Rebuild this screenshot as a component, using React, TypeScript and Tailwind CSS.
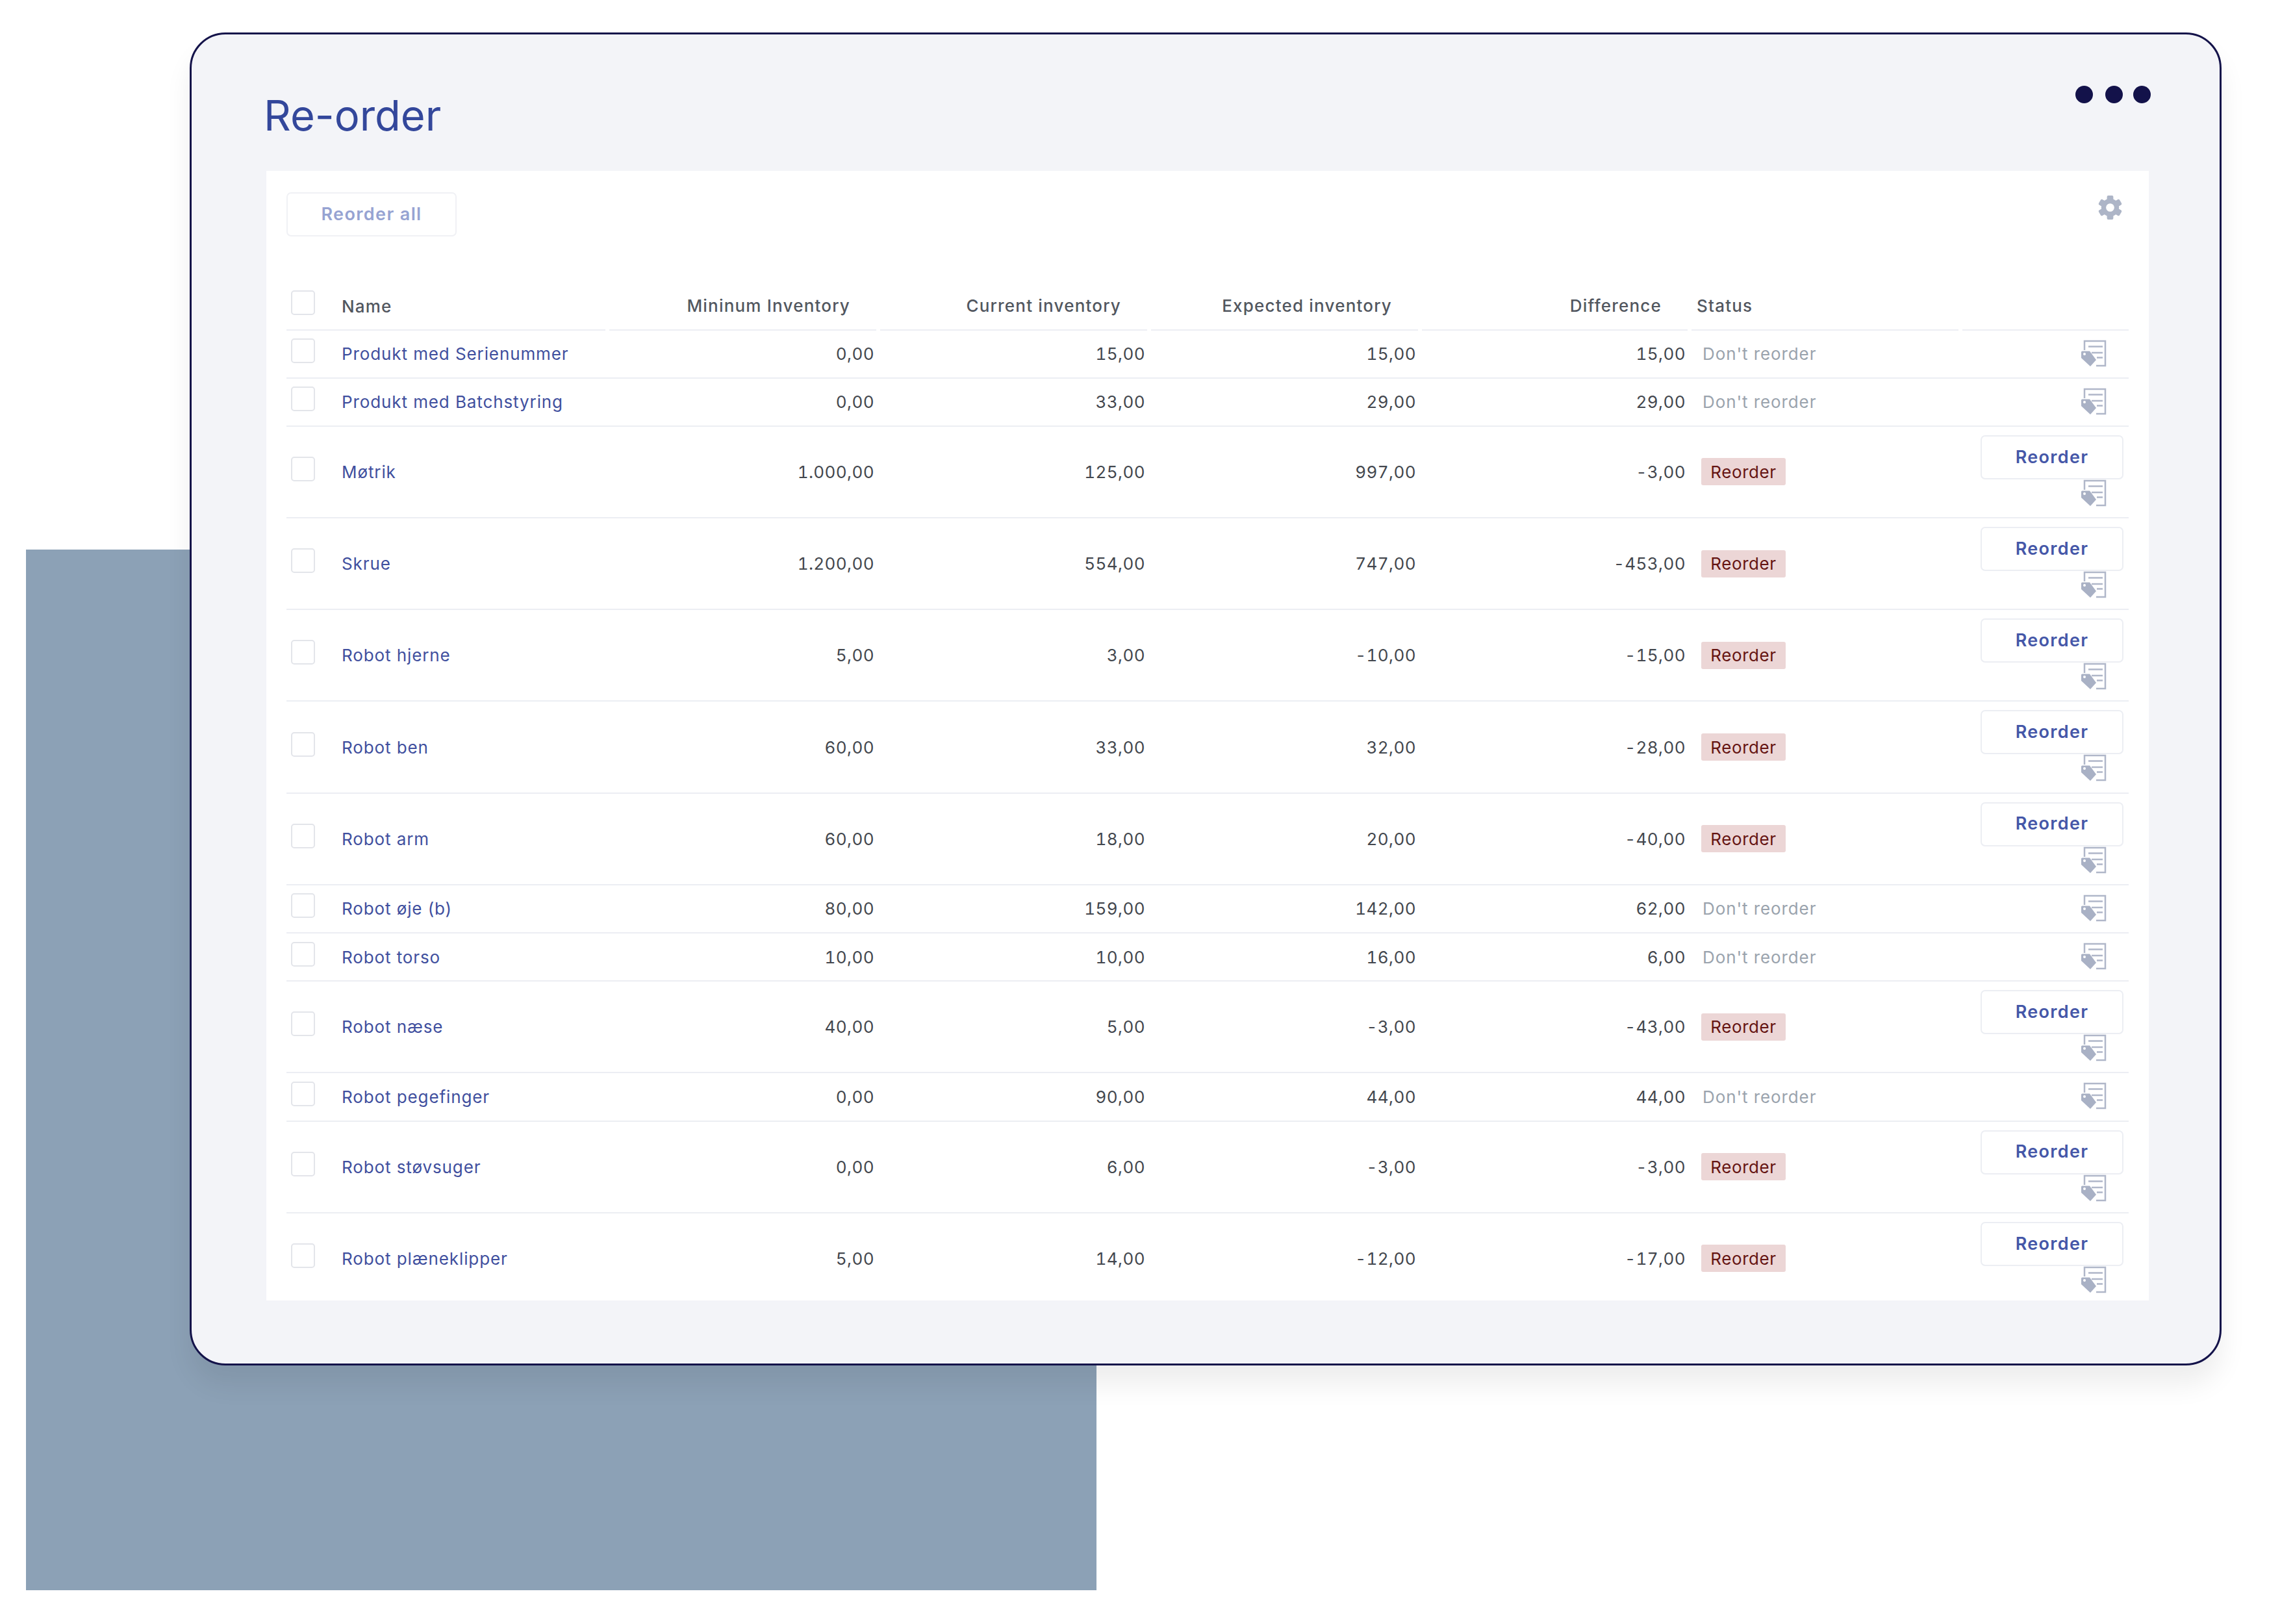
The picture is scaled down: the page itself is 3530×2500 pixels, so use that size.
const GRID = "grid grid-cols-[491px_411px_411px_411px_409px_411px_256px] gap-x-[6px]";

type Row = {
  name: string;
  min: string;
  current: string;
  expected: string;
  diff: string;
  reorder: boolean;
};

const rows: Row[] = [
  { name: "Produkt med Serienummer", min: "0,00", current: "15,00", expected: "15,00", diff: "15,00", reorder: false },
  { name: "Produkt med Batchstyring", min: "0,00", current: "33,00", expected: "29,00", diff: "29,00", reorder: false },
  { name: "Møtrik", min: "1.000,00", current: "125,00", expected: "997,00", diff: "-3,00", reorder: true },
  { name: "Skrue", min: "1.200,00", current: "554,00", expected: "747,00", diff: "-453,00", reorder: true },
  { name: "Robot hjerne", min: "5,00", current: "3,00", expected: "-10,00", diff: "-15,00", reorder: true },
  { name: "Robot ben", min: "60,00", current: "33,00", expected: "32,00", diff: "-28,00", reorder: true },
  { name: "Robot arm", min: "60,00", current: "18,00", expected: "20,00", diff: "-40,00", reorder: true },
  { name: "Robot øje (b)", min: "80,00", current: "159,00", expected: "142,00", diff: "62,00", reorder: false },
  { name: "Robot torso", min: "10,00", current: "10,00", expected: "16,00", diff: "6,00", reorder: false },
  { name: "Robot næse", min: "40,00", current: "5,00", expected: "-3,00", diff: "-43,00", reorder: true },
  { name: "Robot pegefinger", min: "0,00", current: "90,00", expected: "44,00", diff: "44,00", reorder: false },
  { name: "Robot støvsuger", min: "0,00", current: "6,00", expected: "-3,00", diff: "-3,00", reorder: true },
  { name: "Robot plæneklipper", min: "5,00", current: "14,00", expected: "-12,00", diff: "-17,00", reorder: true },
];

function TagDocIcon() {
  return (
    <svg width="45" height="45" viewBox="0 0 45 45" fill="none" className="block">
      <path d="M9 18V4H41V42H27" stroke="#b0b7c9" strokeWidth="2.500" />
      <path d="M15 12.5H37M20 22H37M28 29.5H37" stroke="#b0b7c9" strokeWidth="2.500" />
      <path d="M4 21Q4 19.500 5.500 19.500H17L27 33L18 43L4 30Z" fill="#a9b1c5" />
      <circle cx="9" cy="24" r="2" fill="#fff" />
    </svg>
  );
}

function GearIcon() {
  return (
    <svg width="39" height="39" viewBox="0 0 40 40" className="block">
      <g fill="#adb5c7">
        <rect x="15" y="1" width="10" height="38" rx="2" />
        <rect x="15" y="1" width="10" height="38" rx="2" transform="rotate(60 20 20)" />
        <rect x="15" y="1" width="10" height="38" rx="2" transform="rotate(120 20 20)" />
        <circle cx="20" cy="20" r="14" />
      </g>
      <circle cx="20" cy="20" r="6.500" fill="#fff" />
    </svg>
  );
}

function Checkbox() {
  return <div className="h-[38px] w-[37px] shrink-0 rounded-[5px] border-2 border-[#e3e5ea] bg-white" />;
}

function HeadCell({ children }: { children: string }) {
  return (
    <div className="flex h-[144.5px] items-end justify-end border-b-2 border-[#eceef3] pb-[17px] pr-[40px]">{children}</div>
  );
}

function TableRow({ row }: { row: Row }) {
  const num = "flex items-center justify-end pr-[3px] tabular-nums tracking-[0.4px]";
  return (
    <div
      className={`${GRID} border-b-2 border-[#eceef3] text-[26px] tracking-[0.9px] text-[#43474e] ${
        row.reorder ? "h-[141.2px]" : "h-[74.2px]"
      }`}
    >
      <div className="flex items-center pl-[7px]">
        <div className="mb-[9px]">
          <Checkbox />
        </div>
        <span className="ml-[41px] text-[#404f9e]">{row.name}</span>
      </div>
      <div className={num}>{row.min}</div>
      <div className={num}>{row.current}</div>
      <div className={num}>{row.expected}</div>
      <div className={num}>{row.diff}</div>
      <div className="flex items-center">
        {row.reorder ? (
          <span className="ml-[15px] flex h-[42px] w-[130px] items-center justify-center rounded-[3px] bg-[#ecd6d6] tracking-[0.6px] text-[#651412]">
            Reorder
          </span>
        ) : (
          <span className="ml-[17px] text-[#9aa3ad]">Don't reorder</span>
        )}
      </div>
      {row.reorder ? (
        <div className="flex flex-col items-end pr-[8px] pt-[13px]">
          <button
            type="button"
            className="h-[68px] w-[220px] rounded-[7px] border-2 border-[#eceef3] bg-white text-[27px] font-semibold tracking-[1.3px] text-[#4557a8]"
          >
            Reorder
          </button>
          <div className="mr-[24px] mt-[-2px]">
            <TagDocIcon />
          </div>
        </div>
      ) : (
        <div className="flex items-center justify-end pb-[3px] pr-[32px]">
          <TagDocIcon />
        </div>
      )}
    </div>
  );
}

export default function App() {
  return (
    <div className="relative h-[2500px] w-[3530px] overflow-hidden bg-white font-['Inter',sans-serif]">
      <div className="absolute left-[40px] top-[846px] h-[1602px] w-[1648px] bg-[#8ca1b6]" />
      <div className="relative ml-[292px] mt-[50px] h-[2052px] w-[3128px] rounded-[55px] border-[3px] border-[#14134a] bg-[#f3f4f8] shadow-[0_30px_40px_rgba(0,0,0,0.07)]">
        <div className="flex h-[210px] justify-between pl-[111px] pr-[106px]">
          <h1 className="pt-[80px] text-[65px] font-normal leading-[90px] text-[#33479b]">Re-order</h1>
          <div className="flex pt-[79px]">
            <div className="h-[27px] w-[27px] rounded-full bg-[#13124a]" />
            <div className="ml-[19px] h-[27px] w-[27px] rounded-full bg-[#13124a]" />
            <div className="ml-[16px] h-[27px] w-[27px] rounded-full bg-[#13124a]" />
          </div>
        </div>
        <div className="ml-[115px] h-[1739px] w-[2898px] overflow-hidden bg-white pl-[31px] pt-[33px]">
          <div className="flex w-[2836px] items-start justify-between">
            <button
              type="button"
              className="h-[68px] w-[262px] rounded-[7px] border-2 border-[#f0f1f5] bg-white text-[27px] font-semibold tracking-[1.4px] text-[#96a3d2]"
            >
              Reorder all
            </button>
            <div className="mr-[9px] mt-[4px]">
              <GearIcon />
            </div>
          </div>
          <div className="w-[2836px]">
            <div className={`${GRID} text-[26px] font-medium tracking-[1.2px] text-[#52575f]`}>
              <div className="flex h-[144.5px] items-end border-b-2 border-[#eceef3] pb-[22px] pl-[7px]">
                <Checkbox />
                <span className="mb-[-6px] ml-[41px]">Name</span>
              </div>
              <HeadCell>Mininum Inventory</HeadCell>
              <HeadCell>Current inventory</HeadCell>
              <HeadCell>Expected inventory</HeadCell>
              <HeadCell>Difference</HeadCell>
              <div className="flex h-[144.5px] items-end border-b-2 border-[#eceef3] pb-[17px] pl-[8px]">Status</div>
              <div className="h-[144.5px] border-b-2 border-[#eceef3]" />
            </div>
            {rows.map((row) => (
              <TableRow key={row.name} row={row} />
            ))}
          </div>
        </div>
      </div>
    </div>
  );
}
